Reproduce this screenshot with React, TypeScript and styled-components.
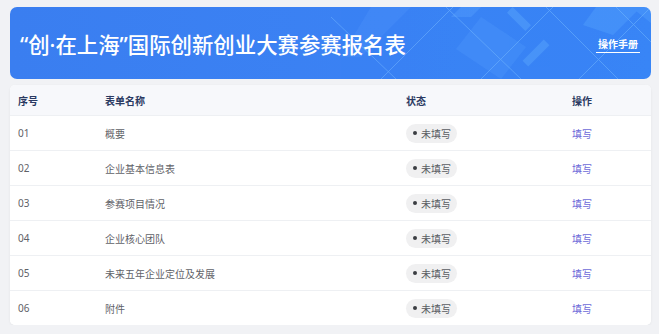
import React from "react";
import styled, { createGlobalStyle } from "styled-components";

const GlobalStyle = createGlobalStyle`
  html, body {
    margin: 0;
    padding: 0;
    background: #f1f2f5;
    font-family: "Noto Sans", "Noto Sans CJK SC", sans-serif;
  }
`;

const Page = styled.div`
  padding: 7px 8px 0 10px;
  display: flex;
  flex-direction: column;
  gap: 6px;
`;

const Banner = styled.div`
  position: relative;
  overflow: hidden;
  height: 72px;
  border-radius: 7px;
  background: linear-gradient(90deg, #3a7ef0 0%, #3b82f4 60%, #3a86f6 100%);
  display: flex;
  align-items: center;
  justify-content: space-between;
  padding: 0 11px 0 10px;
`;

const Title = styled.h1`
  position: relative;
  margin: 0;
  font-size: 21.4px;
  font-weight: 500;
  color: #fff;
`;

const ManualLink = styled.a`
  position: relative;
  color: #fff;
  font-size: 10px;
  font-weight: 700;
  text-decoration: none;
  border-bottom: 1.5px solid #fff;
  padding: 0 2px 1px;
  margin-top: 2px;
`;

const Pattern = styled.svg`
  position: absolute;
  top: 0;
  right: 0;
  height: 100%;
`;

const Card = styled.div`
  background: #fff;
  border-radius: 5px;
  box-shadow: 0 1px 3px rgba(0, 0, 0, 0.06);
  overflow: hidden;
`;

const Row = styled.div<{ $head?: boolean }>`
  display: grid;
  grid-template-columns: 87px 301px 166px 1fr;
  align-items: center;
  height: ${(p) => (p.$head ? "30px" : "35px")};
  padding-left: 8px;
  background: ${(p) => (p.$head ? "#f7f8fb" : "#fff")};
  border-top: ${(p) => (p.$head ? "none" : "1px solid #eef0f3")};
  box-sizing: border-box;
  font-size: 10px;
  font-weight: ${(p) => (p.$head ? 700 : 400)};
  color: ${(p) => (p.$head ? "#2b3a62" : "#5f6268")};
`;

const Pill = styled.span`
  display: inline-flex;
  align-items: center;
  gap: 4px;
  height: 19px;
  padding: 0 6px 0 7px;
  border-radius: 10px;
  background: #f0f0f1;
  color: #595c62;
  font-size: 10px;
  justify-self: start;
  &::before {
    content: "";
    width: 4px;
    height: 4px;
    border-radius: 50%;
    background: #3a3d42;
  }
`;

const FillLink = styled.a`
  color: #6d69d8;
  font-size: 10px;
  cursor: pointer;
`;

const forms = [
  { no: "01", name: "概要" },
  { no: "02", name: "企业基本信息表" },
  { no: "03", name: "参赛项目情况" },
  { no: "04", name: "企业核心团队" },
  { no: "05", name: "未来五年企业定位及发展" },
  { no: "06", name: "附件" },
];

const BannerPattern = () => (
  <Pattern viewBox="0 0 340 72" width="340" preserveAspectRatio="xMaxYMid slice">
    <g fill="#5aa6ff" opacity="0.35">
      <polygon points="60,0 100,0 50,50 30,50" opacity="0.5" />
      <polygon points="150,0 170,0 160,10 140,10" />
      <polygon points="170,10 215,40 190,72 145,42" opacity="0.6" />
      <polygon points="285,0 330,0 302,28 272,18" />
      <polygon points="320,0 340,0 340,16" />
    </g>
    <g stroke="#7cc0ff" strokeWidth="0.8" fill="none" opacity="0.55">
      <line x1="20" y1="10" x2="85" y2="72" />
      <line x1="70" y1="72" x2="142" y2="0" />
      <line x1="135" y1="0" x2="210" y2="72" />
      <line x1="170" y1="72" x2="242" y2="0" />
      <line x1="235" y1="0" x2="307" y2="72" />
      <line x1="268" y1="72" x2="340" y2="0" />
      <line x1="305" y1="0" x2="340" y2="35" />
    </g>
    <g fill="#66b2ff" opacity="0.35">
      <rect x="195" y="8" width="26" height="8" transform="rotate(45 208 12)" />
      <rect x="210" y="42" width="30" height="8" transform="rotate(-45 225 46)" />
    </g>
  </Pattern>
);

export default function App() {
  return (
    <>
      <GlobalStyle />
      <Page>
        <Banner>
          <BannerPattern />
          <Title>“创·在上海”国际创新创业大赛参赛报名表</Title>
          <ManualLink>操作手册</ManualLink>
        </Banner>
        <Card>
          <Row $head>
            <span>序号</span>
            <span>表单名称</span>
            <span>状态</span>
            <span>操作</span>
          </Row>
          {forms.map((f) => (
            <Row key={f.no}>
              <span>{f.no}</span>
              <span>{f.name}</span>
              <Pill>未填写</Pill>
              <FillLink>填写</FillLink>
            </Row>
          ))}
        </Card>
      </Page>
    </>
  );
}
